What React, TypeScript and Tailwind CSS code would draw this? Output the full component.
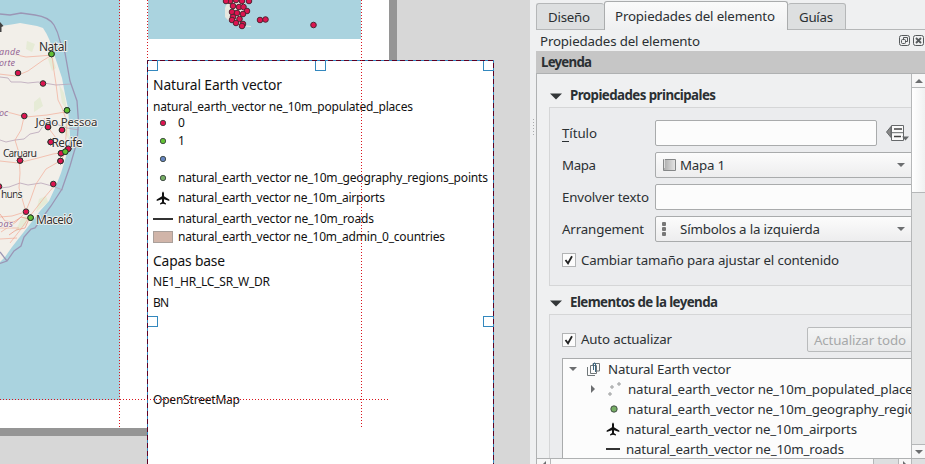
import React from "react";

const SANS = "font-['Noto_Sans',sans-serif]";

const cities: [number, number, string][] = [
  [18, 73, "#dc1450"], [43, 83.5, "#dc1450"], [24.3, 116, "#dc1450"], [48, 127, "#dc1450"],
  [62, 130, "#dc1450"], [50.7, 142, "#dc1450"], [68.3, 148.7, "#dc1450"], [61, 153.3, "#dc1450"],
  [60.5, 161, "#dc1450"], [20, 160.5, "#dc1450"], [53.3, 184, "#dc1450"], [26, 211.7, "#dc1450"],
  [-1, 186.5, "#dc1450"], [51.5, 54, "#62c034"], [67, 110.3, "#62c034"], [65.3, 151.7, "#62c034"], [30.6, 217.7, "#62c034"],
];

const cluster: [number, number][] = [
  [82, 1], [88, 0], [94, 1], [101, 1], [78, 1], [85, 6], [91, 7], [95.5, 7], [99, 11],
  [84, 12], [89, 13], [95, 14], [85, 17], [91.5, 19], [84, 20], [88, 23], [95, 24], [94, 26],
  [112, 20], [117.5, 19.5], [165.5, 25],
];

const labels: [number, number, string, number, number][] = [
  [39, 50.5, "Natal", 28, 12], [35.5, 126, "João Pessoa", 62, 11.5], [51.5, 147, "Recife", 31, 12],
  [3, 157, "Caruaru", 34, 10.5], [1, 198, "huns", 21.5, 10.5], [36, 223.5, "Maceió", 37, 12],
];

function CoastMap() {
  return (
    <svg className="absolute left-0 top-0" width="120" height="400">
      <rect width="120" height="400" fill="#aad3df" />
      <path d="M0 26C9 25 15 24 20 23L37 26L43 28C48 35 51 43 53 51L57 63L62 78L65 94L68 108L69 122L70 135L68 149L65 160L61 173L55 188L49 201L40 211L34 219L27 228L19 238L12 247L5 257L0 262Z" fill="#f2efe9" />
      <g fill="#d7e6bf" opacity=".45">
        <path d="M48 59l4-4 4 13-4 3zM34 102l6-5 3 9-9 6zM59 84l5 9 3 17-5-7zM65 117l3 5 1 18-4-7zM39 199l7-3 2 6-12 10zM21 219l7-4-2 10-11 7zM27 41l8 3-3 8-6-3z" />
      </g>
      <g fill="none" stroke="#b9a5b9" strokeWidth="1" opacity=".8">
        <path d="M0 77l8 1 3 4h10l7 1 10-1 18 3 15-1M0 140l6 2 9-2 9-1 6-5 9-2 8-12 9 4 11 4 12 2M0 188l9-1 11-4 8 2 13-2 11 3 11 4" />
      </g>
      <g fill="none" stroke="#f2a58f" strokeWidth=".8" opacity=".8">
        <path d="M0 53l12 1 14 3 14-1 12-1-10 6-14 10-12 5-17-2M52 56l2 15 2 13 2 16 4 8 5 14-1 14-1 13M0 111l11 2 15 4 21-2 18-3M24 117l-3 13-6 10 4 13 1 20-1 15 7 24M0 161l18 2 20-5 15-4 12-2M65 154l-5 7-14 8-10 15-6 17-5 12-9 9-15 10M0 217l12-1 13-4M0 228l19 0M0 239l17-1M55 185l-11 13-14 18-9 13-11 14M44 118l6 12 12 16" />
      </g>
      <path d="M0 214l5 7 9 1 7-5 8 2-4 9-9 2-7 5" fill="none" stroke="#ec9582" strokeWidth="1" opacity=".7" />
      <path d="M0 14L10 15L21 13L35 15Q49 17 54 25Q58 32 60 41L65 53L70 81L77 101L78.5 122L77 142L70 166L62 189L51 206L40 221L35 228L31 229L24 237L21 246L14 251L7 261L0 263.5M0 252l7 9" fill="none" stroke="#9b96b5" strokeWidth="1.3" />
      <g className="font-['Noto_Sans',sans-serif] italic" fill="#956796" fontSize="9" stroke="#f2efe9" strokeWidth="1.5" paintOrder="stroke">
        <text x="-1" y="55" textLength="21">ande</text><text x="-1" y="66" textLength="16">orte</text>
        <text x="-1" y="116">oc</text><text x="-2" y="227" textLength="15">oas</text>
      </g>
      <path d="M0 22l3.5 4-2 1v5H0z" fill="#424242" />
      <g stroke="#28352d" strokeWidth="1">
        {cities.map(([x, y, c], i) => <circle key={i} cx={x} cy={y} r="2.8" fill={c} />)}
      </g>
      <g className="font-['Noto_Sans',sans-serif]" fill="#303030" stroke="#f4f2ee" strokeWidth="1.7" paintOrder="stroke">
        {labels.map(([x, y, t, w, s]) => <text key={t} x={x} y={y} textLength={w} fontSize={s}>{t}</text>)}
      </g>
      <g stroke="#28352d" strokeWidth="1">
        {[...cities.slice(3, 10), ...cities.slice(13)].map(([x, y, c], i) => <circle key={i} cx={x} cy={y} r="2.8" fill={c} />)}
      </g>
    </svg>
  );
}

function Plane() {
  return (
    <svg width="14" height="14" viewBox="0 0 14 14" fill="#111">
      <path d="M6 2.2Q7 -1 8 2.2V5.2L13.3 8.6V10L8 8.3V11L10 12.6V13.5L7 12.8 4 13.5V12.6L6 11V8.3L.7 10V8.6L6 5.2Z" />
    </svg>
  );
}

function Dot({ color, r = 2.7 }: { color: string; r?: number }) {
  return <svg width="8" height="8"><circle cx="4" cy="4" r={r} fill={color} stroke="#3b4540" strokeWidth=".9" /></svg>;
}

function LegendRow({ gap, symbol, text, width }: { gap: string; symbol?: React.ReactNode; text?: string; width?: number }) {
  return (
    <div className={`flex h-[18px] items-center ${gap}`}>
      {symbol && <span className="mr-[5px] flex w-5 shrink-0 items-center justify-center">{symbol}</span>}
      {text && <FitText text={text} width={width ?? 6} size={12} />}
    </div>
  );
}

function FitText({ text, width, size, bold, color = "#111", drop = 0 }: { text: string; width: number; size: number; bold?: boolean; color?: string; drop?: number }) {
  return (
    <svg className="block shrink-0 overflow-visible" width={width} height="18">
      <text className="font-['Noto_Sans',sans-serif]" x="0" y={9 + size * 0.36 + drop} textLength={width} fontSize={size} fontWeight={bold ? 700 : 400} fill={color}>{text}</text>
    </svg>
  );
}

const handle = "absolute size-[11px] border border-[#3388be] bg-white";

function Legend() {
  return (
    <div className="absolute left-[147px] top-[60px] h-[404px] w-[347px] bg-white pl-[6px] pt-px">
      <div className="mt-[15px]"><FitText text="Natural Earth vector" width={129} size={13.8} /></div>
      <LegendRow gap="mt-1" text="natural_earth_vector ne_10m_populated_places" width={260} />
      <LegendRow gap="-mt-[2px]" symbol={<Dot color="#dc1450" />} text="0" width={7} />
      <LegendRow gap="" symbol={<Dot color="#62c034" />} text="1" width={6} />
      <LegendRow gap="" symbol={<Dot color="#6684bf" />} />
      <LegendRow gap="mt-px" symbol={<Dot color="#76ad64" />} text="natural_earth_vector ne_10m_geography_regions_points" width={310} />
      <LegendRow gap="mt-[2px]" symbol={<Plane />} text="natural_earth_vector ne_10m_airports" width={207} />
      <LegendRow gap="mt-[3px]" symbol={<i className="h-[1.5px] w-5 bg-[#333]" />} text="natural_earth_vector ne_10m_roads" width={196} />
      <LegendRow gap="" symbol={<i className="h-3 w-5 border border-[#aaa09b] bg-[#d1b5a9]" />} text="natural_earth_vector ne_10m_admin_0_countries" width={267} />
      <div className="mt-1.5"><FitText text="Capas base" width={72} size={13.8} /></div>
      <LegendRow gap="mt-[3px]" text="NE1_HR_LC_SR_W_DR" width={117} />
      <LegendRow gap="mt-[3px]" text="BN" width={16} />
      <LegendRow gap="mt-[79px]" text="OpenStreetMap" width={87} />
      <span className={`${handle} left-0 top-0`} />
      <span className={`${handle} left-[168px] top-0`} />
      <span className={`${handle} right-0 top-0`} />
      <span className={`${handle} left-0 top-[256px]`} />
      <span className={`${handle} right-0 top-[256px]`} />
      <svg className="absolute left-0 top-0" width="347" height="404">
        <path d="M.5 404V.5H346.5V404" fill="none" stroke="#3388be" />
        <path d="M.5 404V.5H346.5V404" fill="none" stroke="#5c0024" strokeDasharray="5 3" />
      </svg>
    </div>
  );
}

function Canvas() {
  return (
    <section className="relative h-full w-[530px] shrink-0 overflow-hidden bg-[#d7d7d7]">
      <div className="absolute left-0 top-0 h-[436px] w-[397px] bg-[#959595]" />
      <div className="absolute left-0 top-0 h-[428px] w-[389px] bg-white" />
      <CoastMap />
      <svg className="absolute left-[148px] top-0" width="213" height="39">
        <rect width="213" height="39" fill="#aad3df" />
        <path d="M80 0l-3 8v9l5 5 6 3 6 2 3-1-4-5 0-6 4-6V0z" fill="#e6e7df" />
        <path d="M98 26l5 .5" stroke="#e6e7df" />
        <g fill="#dc1450" stroke="#512532">{cluster.map(([x, y], i) => <circle key={i} cx={x} cy={y} r="2.8" />)}</g>
      </svg>
      <Legend />
      <svg className="absolute left-0 top-0" width="390" height="430" fill="none" stroke="#d9141c" strokeDasharray="1 2">
        <path d="M119.5 0V428M361.5 0V428M147.5 0V60M0 399.5H389" />
      </svg>
    </section>
  );
}

function Arrow({ dir, big }: { dir: "up" | "down" | "right" | "left"; big?: boolean }) {
  const d = { up: "M0 5L4 1L8 5Z", down: "M0 1H8L4 5Z", right: "M2 0L6 4L2 8Z", left: "M6 0L2 4L6 8Z" }[dir];
  const sideways = dir === "right" || dir === "left";
  return <svg className="block shrink-0" width={big ? 12 : 8} height={big ? 9 : sideways ? 8 : 6} viewBox={sideways ? "0 0 8 8" : "0 0 8 6"}><path d={d} fill={big ? "#333638" : "#6c6e70"} /></svg>;
}

function Checkbox() {
  return (
    <span className="flex size-[14px] items-center justify-center border border-[#b2b4b5] bg-[#fcfcfc]">
      <svg width="10" height="10"><path d="M1.5 5L4 8.3L8 1.3" fill="none" stroke="#222" strokeWidth="1.8" /></svg>
    </span>
  );
}

const ink = "#2b3033";

function SectionTitle({ text, width }: { text: string; width: number }) {
  return <div className="flex h-[18px] items-center gap-[8px] pl-[13px]"><Arrow dir="down" big /><FitText text={text} width={width} size={13.3} bold color={ink} drop={-0.8} /></div>;
}

function Field({ label, width, children }: { label: string; width: number; children: React.ReactNode }) {
  return (
    <div className="flex h-[26px] w-[400px] items-center">
      <span className="w-[93px] shrink-0"><FitText text={label} width={width} size={13.3} color={ink} /></span>
      {children}
    </div>
  );
}

const combo = "flex h-[26px] w-[280px] items-center border border-[#a9abac] rounded-[2px] bg-gradient-to-b from-[#fcfcfc] to-[#ededee]";

function ExpressionIcon() {
  return (
    <svg width="23" height="18" fill="none" stroke="#66696b">
      <path d="M5 2.5L.5 8L5 13.5Z" fill="#888" /><path d="M5.5 1.5H17.5V16.5H5.5Z" fill="#fafafa" />
      <path d="M8 5H16M8 12.5H15" stroke="#444" strokeWidth="1.5" /><path d="M6 8.7H17" />
      <path d="M16 12.5H23L19.5 16.5Z" fill="#66696b" stroke="none" />
    </svg>
  );
}

function TreeRow({ pad, icon, text, width, arrow }: { pad: string; icon: React.ReactNode; text: string; width: number; arrow?: React.ReactNode }) {
  return (
    <div className={`flex h-5 items-center ${pad}`}>
      {arrow}{icon}<FitText text={text} width={width} size={13.3} color={ink} />
    </div>
  );
}

function PropertiesForm() {
  return (
    <div className="h-[385px] w-[374px] overflow-hidden bg-[#eff0f1]">
      <div className="pt-[13px]"><SectionTitle text="Propiedades principales" width={146} /></div>
      <div className="ml-3 mt-[2px] h-[179px] w-[400px] border border-[#d5d6d7] bg-[#ebecee] pl-3 pt-3">
        <Field label="Título" width={35}>
          <div className="h-[26px] w-[222px] rounded-[2px] border border-[#a9abac] bg-[#fcfcfc]" />
          <span className="ml-[9px]"><ExpressionIcon /></span>
        </Field>
        <div className="h-1.5 pt-px"><i className="-mt-[6px] block h-px w-[7px] bg-[#2b3033]" /></div>
        <Field label="Mapa" width={34}>
          <div className={combo}>
            <svg className="ml-1.5 mr-[3px]" width="15" height="14"><defs><linearGradient id="m"><stop stopColor="#aaa" /><stop offset="1" stopColor="#e6e6e6" /></linearGradient></defs><path d="M1.5 1.5H13.5V12.5H1.5Z" fill="url(#m)" stroke="#858788" /><path d="M2.5 1V10" stroke="#ddd" /></svg>
            <FitText text="Mapa 1" width={45} size={13.3} color={ink} />
            <span className="ml-[172px]"><Arrow dir="down" /></span>
          </div>
        </Field>
        <div className="mt-1.5"><Field label="Envolver texto" width={87}><div className="h-[26px] w-[280px] rounded-[2px] border border-[#a9abac] bg-[#fcfcfc]" /></Field></div>
        <div className="mt-1.5"><Field label="Arrangement" width={82}>
          <div className={combo}>
            <span className="ml-1.5 mr-[13px] flex w-[5px] flex-col gap-px"><i className="size-1 rounded-[1px] bg-[#777]" /><i className="size-1 rounded-[1px] bg-[#777]" /><i className="size-1 rounded-[1px] bg-[#777]" /></span>
            <FitText text="Símbolos a la izquierda" width={140} size={13.3} color={ink} />
            <span className="ml-[77px]"><Arrow dir="down" /></span>
          </div>
        </Field></div>
        <div className="mt-[9px] flex h-[18px] items-center gap-[5px]"><Checkbox /><FitText text="Cambiar tamaño para ajustar el contenido" width={258} size={13.3} color={ink} /></div>
      </div>
      <div className="mt-[8px]"><SectionTitle text="Elementos de la leyenda" width={148} /></div>
      <div className="ml-3 mt-[2px] h-[180px] w-[400px] border border-[#d5d6d7] bg-[#ebecee] pl-3 pt-3">
        <div className="flex h-[25px] items-center gap-[5px]">
          <Checkbox /><FitText text="Auto actualizar" width={91} size={13.3} color={ink} drop={-0.4} />
          <div className="ml-[130px] flex h-[25px] w-[110px] shrink-0 items-center rounded-[2px] border border-[#b9bbbc] bg-gradient-to-b from-[#f4f5f5] to-[#e8e9ea] pl-[6px]"><FitText text="Actualizar todo" width={92} size={13.3} color="#a6a8a9" /></div>
        </div>
        <div className="mt-[6px] h-[130px] w-[400px] border border-[#a9abac] bg-[#fcfcfc]">
          <TreeRow pad="pl-[6px]" arrow={<Arrow dir="down" />} text="Natural Earth vector" width={123} icon={
            <svg className="ml-[10px] mr-[8px]" width="13" height="14" fill="none" stroke="#707779"><path d="M.5 5V13.5H8M3.5 3.5H9.5V11.5H3.5ZM6 3V1.5H12.5V9H10" /><path d="M6.5 8V1.5Q8.5 0 8.5 2V10" stroke="#3c6680" /></svg>
          } />
          <TreeRow pad="pl-[26px]" arrow={<Arrow dir="right" />} text="natural_earth_vector ne_10m_populated_places" width={291} icon={
            <svg className="ml-[11px] mr-[7px]" width="13" height="14" fill="none" stroke="#858788" strokeWidth=".9"><circle cx="2" cy="12" r="1.2" /><circle cx="4" cy="5" r="1.2" /><circle cx="11" cy="2" r="1.2" /></svg>
          } />
          <TreeRow pad="pl-[47px]" icon={<span className="mr-[10px]"><Dot color="#76ad64" r={3.2} /></span>} text="natural_earth_vector ne_10m_geography_regions_points" width={346} />
          <TreeRow pad="pl-[43px]" icon={<span className="mr-[6px] flex w-[14px] shrink-0"><Plane /></span>} text="natural_earth_vector ne_10m_airports" width={231} />
          <TreeRow pad="pl-[43px]" icon={<i className="mr-[6px] h-[2px] w-[14px] shrink-0 bg-[#333]" />} text="natural_earth_vector ne_10m_roads" width={218} />
        </div>
      </div>
    </div>
  );
}

export default function App() {
  return (
    <main className={`flex h-[464px] w-[925px] overflow-hidden bg-[#eff0f1] ${SANS}`}>
      <Canvas />
      <div className="flex w-[6px] shrink-0 justify-center pt-[119px]">
        <div className="flex flex-col gap-[2px]">{[0, 1, 2, 3, 4, 5].map((n) => <i key={n} className="size-px bg-[#aaacae]" />)}</div>
      </div>
      <aside className="flex w-[389px] shrink-0 flex-col">
        <nav className="flex h-[30px] shrink-0 items-end">
          <div className="flex h-[27px] w-[68px] items-center rounded-t-[3px] border border-r-0 border-[#b5b7b8] bg-[#dddfe0] pl-[11px]"><FitText text="Diseño" width={42} size={13.3} color={ink} /></div>
          <div className="flex h-[29px] w-[184px] items-center rounded-t-[3px] border border-b-0 border-[#aaacad] bg-gradient-to-b from-[#fafafa] to-[#eff0f1] pb-px pl-[10px]"><FitText text="Propiedades del elemento" width={160} size={13.3} color={ink} /></div>
          <div className="flex h-[27px] w-[58px] items-center rounded-t-[3px] border border-l-0 border-[#b5b7b8] bg-[#dddfe0] pl-[11px]"><FitText text="Guías" width={34} size={13.3} color={ink} /></div>
          <div className="h-px flex-1 bg-[#b5b7b8]" />
        </nav>
        <div className="flex h-[21px] shrink-0 items-center justify-between pl-[4px] pr-px">
          <FitText text="Propiedades del elemento" width={160} size={13.3} color={ink} drop={0.4} />
          <div className="flex gap-[3px]">
            <svg width="11" height="11" fill="none" stroke="#55595b"><rect x=".5" y=".5" width="10" height="10" rx="2" /><rect x="2.5" y="4.5" width="4" height="4" rx="1" /><path d="M4.5 4V2.5H8.5V6.5H7" /></svg>
            <svg width="11" height="11" fill="none" stroke="#55595b"><rect x=".5" y=".5" width="10" height="10" rx="2" /><path d="M3 3L8 8M8 3L3 8" strokeWidth="1.8" /></svg>
          </div>
        </div>
        <header className="flex h-[23px] shrink-0 items-center border-b border-[#afb1b2] bg-[#c6c6c6] pl-[5px]"><FitText text="Leyenda" width={51} size={13.3} bold color={ink} /></header>
        <div className="flex h-[384px] shrink-0 border-l border-[#afb1b2]">
          <PropertiesForm />
          <div className="flex w-[14px] shrink-0 flex-col border-l border-[#b5b7b8] bg-[#e5e6e6]">
            <div className="flex h-[14px] items-center justify-center border-b border-[#b5b7b8] bg-[#f7f7f7]"><Arrow dir="up" /></div>
            <div className="h-[105px] border-b border-[#b5b7b8] bg-gradient-to-r from-white to-[#f0f1f1]" />
            <div className="flex-1" />
            <div className="flex h-[14px] items-center justify-center border-t border-[#b5b7b8] bg-[#f7f7f7]"><Arrow dir="down" /></div>
          </div>
        </div>
        <div className="flex h-[6px] shrink-0 overflow-hidden border-l border-t border-[#afb1b2] bg-[#dddfe0]">
          <div className="flex w-[14px] justify-center border-r border-[#b5b7b8] bg-[#f7f7f7] pt-[2px]"><Arrow dir="left" /></div>
          <div className="w-[323px] border-r border-[#b5b7b8] bg-[#f9f9f9]" />
          <div className="w-6" />
          <div className="flex w-[14px] justify-center border-x border-[#b5b7b8] bg-[#f7f7f7] pt-[2px]"><Arrow dir="right" /></div>
        </div>
      </aside>
    </main>
  );
}
